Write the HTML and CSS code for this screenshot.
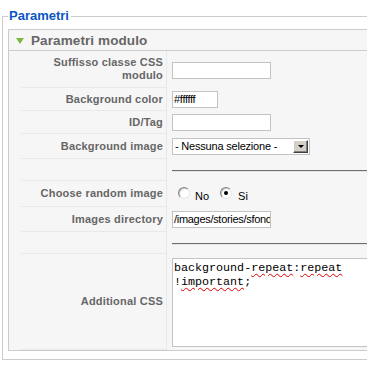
FILE: index.html
```html
<!DOCTYPE html>
<html>
<head>
<meta charset="utf-8">
<link rel="stylesheet" href="styles.css">
</head>
<body>
<div class="page">
  <fieldset class="params">
    <legend>Parametri</legend>
    <div class="panel">
      <div class="panel-head"><span class="tri"></span><span class="title">Parametri modulo</span></div>
      <div class="panel-body">
        <table class="paramlist">
          <tr class="r1">
            <td class="key">Suffisso classe CSS<br>modulo</td>
            <td class="val"><span class="txt w99"></span></td>
          </tr>
          <tr class="r2">
            <td class="key">Background color</td>
            <td class="val"><span class="txt w46">#ffffff</span></td>
          </tr>
          <tr class="r3">
            <td class="key">ID/Tag</td>
            <td class="val"><span class="txt w99"></span></td>
          </tr>
          <tr class="r4">
            <td class="key">Background image</td>
            <td class="val"><span class="select"><span class="sel-text">- Nessuna selezione -</span><span class="sel-btn"><span class="arrow"></span></span></span></td>
          </tr>
          <tr class="r5">
            <td class="key"></td>
            <td class="val"><div class="rule"></div></td>
          </tr>
          <tr class="r6">
            <td class="key">Choose random image</td>
            <td class="val"><div class="radios"><span class="radio"></span><span class="rlabel">No</span><span class="radio on"></span><span class="rlabel">Si</span></div></td>
          </tr>
          <tr class="r7">
            <td class="key">Images directory</td>
            <td class="val"><span class="txt w99">/images/stories/sfondi</span></td>
          </tr>
          <tr class="r8">
            <td class="key"></td>
            <td class="val"><div class="rule"></div></td>
          </tr>
          <tr class="r9">
            <td class="key">Additional CSS</td>
            <td class="val"><div class="area">background-<span class="sp">repeat</span>:<span class="sp">repeat</span><br>!<span class="sp">important</span>;</div></td>
          </tr>
        </table>
      </div>
    </div>
  </fieldset>
</div>
</body>
</html>
```
FILE: styles.css
```css
html, body {
  margin: 0;
  padding: 0;
  overflow: hidden;
  background: #fff;
}
body {
  font-family: "Liberation Sans", Arial, sans-serif;
  font-size: 11px;
  color: #333;
}
.page {
  width: 430px;
  padding: 9px 0 0 2px;
}
.params {
  margin: 0;
  padding: 6px 0 8px 5px;
  border: 1px solid #ccc;
  min-width: 0;
}
.params legend {
  padding: 0 2px 0 1px;
  color: #0b55c4;
  font-size: 13px;
  font-weight: bold;
  line-height: 14px;
}
.panel {
  border: 1px solid #ccc;
  background: #f6f6f6;
}
.panel-head {
  height: 20px;
  border-bottom: 1px solid #ccc;
  display: flex;
  align-items: center;
  padding-left: 7px;
  background: #f6f6f6;
}
.tri {
  width: 0;
  height: 0;
  border-left: 4.5px solid transparent;
  border-right: 4.5px solid transparent;
  border-top: 6px solid #7cb940;
  margin-right: 7px;
  margin-top: 2px;
}
.title {
  color: #666;
  font-weight: bold;
  font-size: 13.5px;
  letter-spacing: 0.1px;
}
.panel-body {
  padding-left: 12px;
}
.paramlist {
  width: 100%;
  border-collapse: separate;
  border-spacing: 0;
}
.paramlist td {
  padding: 0;
  vertical-align: middle;
}
.key {
  box-sizing: border-box;
  width: 146px;
  padding-right: 3px !important;
  text-align: right;
  color: #666;
  font-weight: bold;
  line-height: 13px;
  letter-spacing: 0.2px;
  border-bottom: 1px solid #e9e9e9;
  border-right: 1px solid #e9e9e9;
}
.val {
  padding-left: 5px !important;
}
.r1 { height: 37px; }
.r2 { height: 23px; }
.r3 { height: 23px; }
.r4 { height: 25px; }
.r5 { height: 22px; }
.r6 { height: 26px; }
.r7 { height: 25px; }
.r8 { height: 22px; }
.r9 { height: 96px; }
.r1 .val { padding-top: 2px !important; }
.txt {
  display: block;
  box-sizing: border-box;
  height: 17px;
  border: 1px solid #c3c3c3;
  background: #fff;
  color: #000;
  font-size: 11px;
  line-height: 15px;
  padding: 0 1px;
  white-space: nowrap;
  overflow: hidden;
  letter-spacing: -0.3px;
}
.w99 { width: 99px; }
.w46 { width: 46px; }
.select {
  display: flex;
  box-sizing: border-box;
  width: 138px;
  height: 17px;
  border: 1px solid #c3c3c3;
  background: #fff;
  color: #000;
  align-items: center;
  padding: 1px;
}
.sel-text {
  flex: 1;
  padding-left: 1px;
  font-size: 11px;
  line-height: 13px;
  white-space: nowrap;
  overflow: hidden;
  letter-spacing: -0.2px;
}
.sel-btn {
  box-sizing: border-box;
  width: 15px;
  height: 13px;
  background: #d4d0c8;
  border-top: 1px solid #fff;
  border-left: 1px solid #fff;
  border-right: 1px solid #404040;
  border-bottom: 1px solid #404040;
  box-shadow: inset -1px -1px 0 #808080;
  display: flex;
  align-items: center;
  justify-content: center;
}
.arrow {
  width: 0;
  height: 0;
  border-left: 3px solid transparent;
  border-right: 3px solid transparent;
  border-top: 3px solid #000;
}
.rule {
  height: 0;
  border-top: 1px solid #6e6e6e;
  border-bottom: 1px solid #e4e4e4;
  margin-top: 1px;
}
.radios {
  display: flex;
  align-items: center;
  padding-left: 6px;
}
.radio {
  box-sizing: border-box;
  width: 12px;
  height: 12px;
  border-radius: 50%;
  border: 1px solid;
  border-color: #808080 #e6e6e6 #e6e6e6 #808080;
  background: #fff;
  box-shadow: inset 1px 1px 0 #c8c8c8;
  position: relative;
  margin-top: -3px;
}
.radio.on::after {
  content: "";
  position: absolute;
  left: 3px;
  top: 3px;
  width: 4px;
  height: 4px;
  border-radius: 50%;
  background: #000;
}
.rlabel {
  color: #000;
  font-size: 11px;
  margin: 4px 11px 0 5px;
}
.rlabel:last-child { margin-right: 0; margin-left: 6px; }
.area {
  box-sizing: border-box;
  width: 196px;
  height: 89px;
  border: 1px solid #c3c3c3;
  border-right: none;
  background: #fff;
  color: #000;
  font-family: "Liberation Mono", "Courier New", monospace;
  font-size: 11.7px;
  line-height: 14px;
  padding: 2px 0 0 1px;
  white-space: nowrap;
  overflow: hidden;
}
.sp {
  text-decoration: underline wavy #e00000;
  text-decoration-thickness: 1px;
  text-underline-offset: 2px;
}
```
